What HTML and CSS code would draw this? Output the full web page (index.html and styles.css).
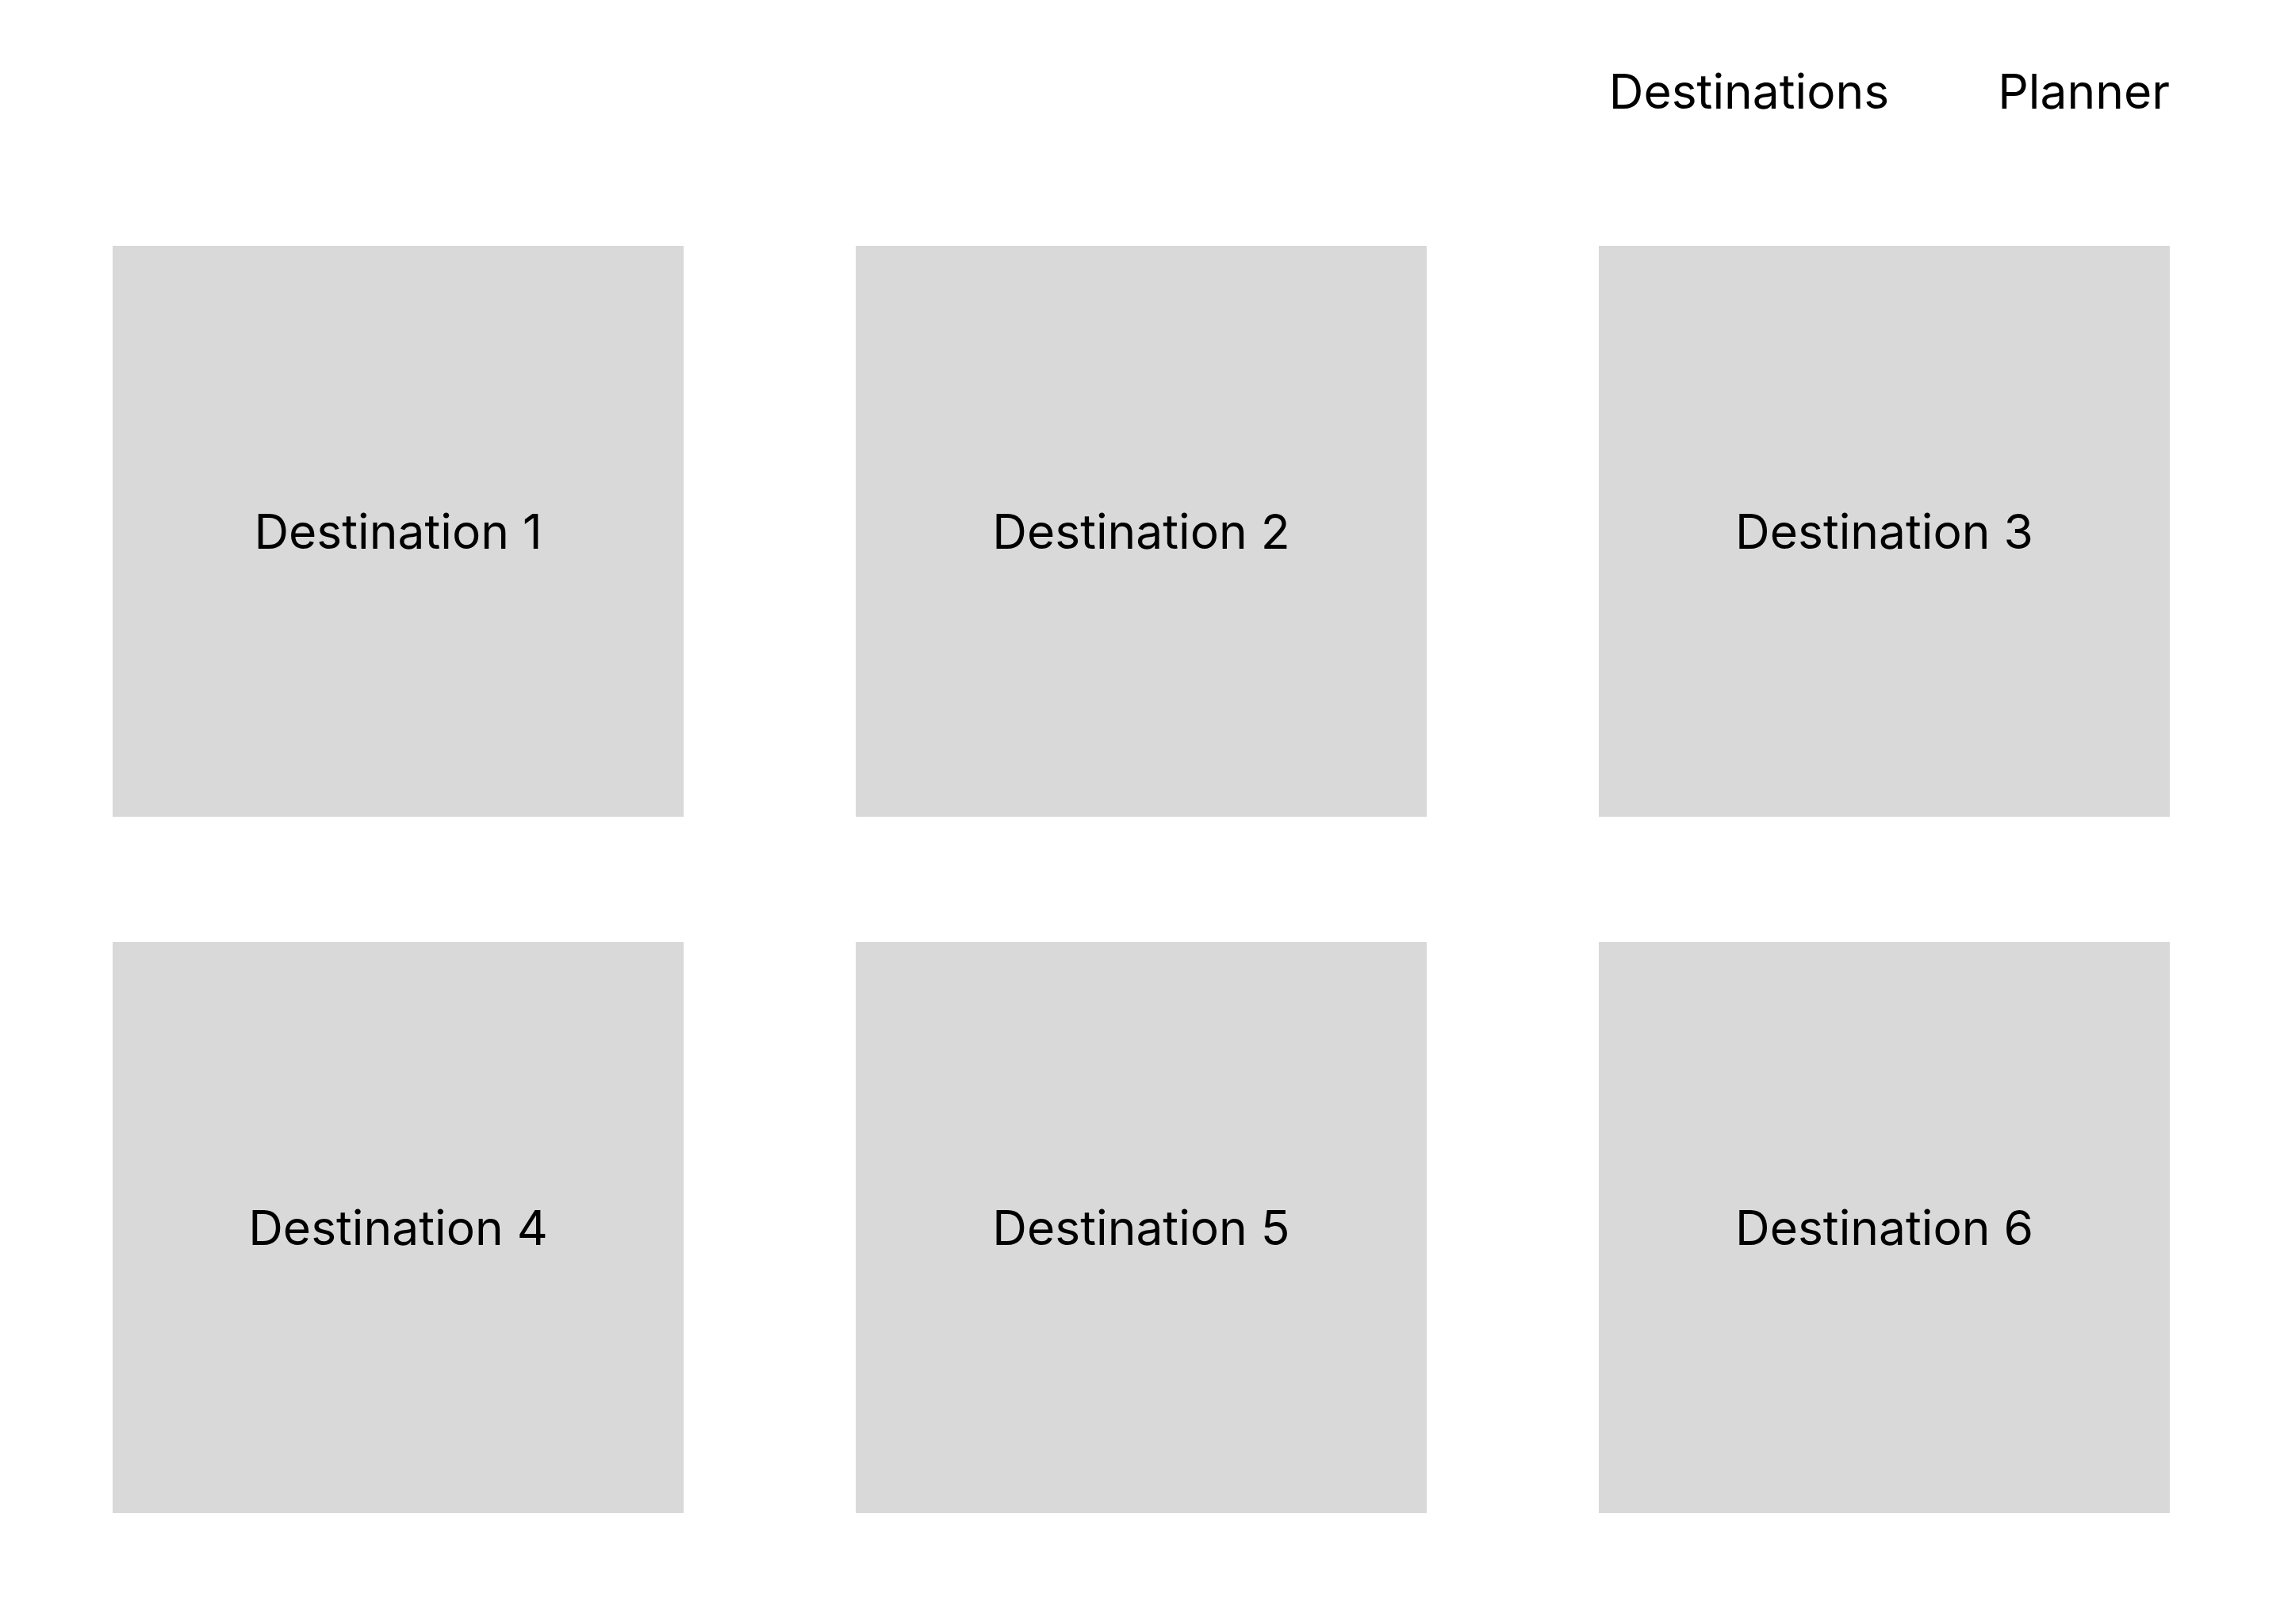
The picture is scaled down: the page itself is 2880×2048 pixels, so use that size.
FILE: index.html
```html
<!DOCTYPE html>
<html>
<head>
<meta charset="utf-8">
<link rel="stylesheet" href="styles.css">
</head>
<body>
<header class="nav">
  <a class="nav-link">Destinations</a>
  <a class="nav-link">Planner</a>
</header>
<main class="grid">
  <div class="card">Destination 1</div>
  <div class="card">Destination 2</div>
  <div class="card">Destination 3</div>
  <div class="card">Destination 4</div>
  <div class="card">Destination 5</div>
  <div class="card">Destination 6</div>
</main>
</body>
</html>
```
FILE: styles.css
```css
html, body {
  margin: 0;
  padding: 0;
  background: #ffffff;
}
body {
  font-family: Inter, "Noto Sans", sans-serif;
  color: #000000;
  width: 2880px;
  height: 2048px;
  padding: 0 144px 0 142px;
  box-sizing: border-box;
}
.nav {
  display: flex;
  justify-content: flex-end;
  gap: 137px;
  padding-top: 79px;
  height: 72px;
  font-size: 60.5px;
  line-height: 72px;
}
.nav-link {
  color: #000;
  text-decoration: none;
}
.grid {
  margin-top: 159px;
  display: grid;
  grid-template-columns: repeat(3, 720px);
  grid-auto-rows: 720px;
  column-gap: 217px;
  row-gap: 158px;
}
.card {
  background: #d9d9d9;
  display: flex;
  align-items: center;
  justify-content: center;
  font-size: 60.5px;
}
```
